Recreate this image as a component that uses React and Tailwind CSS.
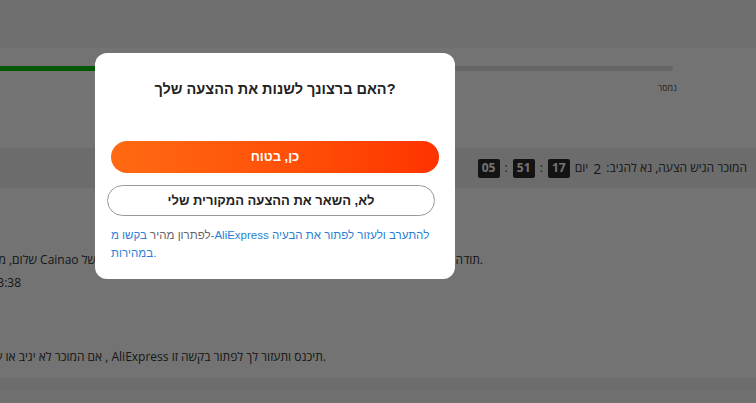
const Box = ({ children }) => (
  <span className="flex h-[19px] w-[22px] items-center justify-center rounded-[2px] bg-[#2a2a2a] text-[12px] font-bold text-white">
    {children}
  </span>
);

export default function App() {
  return (
    <div className="relative h-[403px] w-[756px] overflow-hidden bg-[#f9f9f9] font-['Open_Sans','DejaVu_Sans',sans-serif]">
      {/* page behind the dialog */}
      <div className="h-12 bg-[#f7f7f7]" />
      <div className="h-[100px] bg-white pt-[18px]">
        <div className="mr-[83px] h-[5px] rounded-r-full bg-[#e2e2e2]">
          <div className="h-full w-[240px] bg-[#00c200]" />
        </div>
        <div className="mt-[11px] flex justify-end pr-[79px] text-[9px] leading-3 text-[#555]">נמסר</div>
      </div>

      <div dir="rtl" className="flex h-10 items-center gap-[5px] bg-[#efefef] pr-[9px] text-[12px] text-[#333]">
        <span>המוכר הגיש הצעה, נא להגיב:</span>
        <span className="text-[14px]">2</span>
        <span>יום</span>
        <Box>17</Box>
        <span>:</span>
        <Box>51</Box>
        <span>:</span>
        <Box>05</Box>
      </div>

      <div className="h-[190px] bg-white text-[12px] leading-[18px] text-[#333]">
        <div className="flex pt-[63px]">
          <div className="flex w-[96px] justify-end overflow-hidden">
            <span className="whitespace-nowrap">שלום, מחלקת שירות הלקוחות Cainao של</span>
          </div>
          <div className="flex flex-1 justify-end pr-[273px]">
            <span className="whitespace-nowrap">תודה.</span>
          </div>
        </div>
        <div className="mt-[5px] flex w-[21px] justify-end overflow-hidden">
          <span className="whitespace-nowrap">2024-05-17 13:38</span>
        </div>
        <div className="mt-[56px] flex w-[326px] justify-end overflow-hidden">
          <span className="whitespace-nowrap">אם המוכר לא יגיב או עונה לך בזמן , AliExpress תיכנס ותעזור לך לפתור בקשה זו.</span>
        </div>
      </div>
      <div className="h-3 bg-[#f2f2f2]" />

      {/* dim layer */}
      <div className="absolute inset-0 bg-black/55" />

      {/* dialog */}
      <div className="absolute left-[95px] top-[53px] w-[360px] rounded-[12px] bg-white pb-[17px] pt-6 font-['Liberation_Sans','DejaVu_Sans',sans-serif]">
        <h2 className="text-center text-[14.5px] font-bold leading-6 text-[#222]">האם ברצונך לשנות את ההצעה שלך?</h2>
        <button className="mx-4 mt-10 flex h-8 w-[328px] items-center justify-center rounded-full bg-gradient-to-r from-[#ff6a12] to-[#ff3200] text-[13px] font-bold text-white">
          כן, בטוח
        </button>
        <button className="ml-3 mt-3 flex h-[31px] w-[328px] items-center justify-center rounded-full border border-[#999] text-[13px] font-bold text-[#222]">
          לא, השאר את ההצעה המקורית שלי
        </button>
        <p className="mt-[10px] pl-4 pr-3 text-[11.5px] leading-[18px] text-[#2a7fd4]">
          <span className="text-[#666]">לפתרון מהיר </span>
          בקשו מ-AliExpress להתערב ולעזור לפתור את הבעיה במהירות.
        </p>
      </div>
    </div>
  );
}
